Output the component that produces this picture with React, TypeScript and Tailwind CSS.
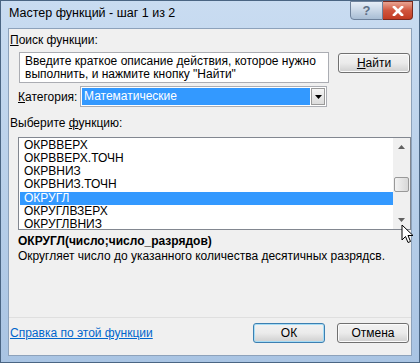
import React from 'react';

const font = { fontFamily: '"Segoe UI", "Liberation Sans", Arial, sans-serif' };

const items = ['ОКРВВЕРХ', 'ОКРВВЕРХ.ТОЧН', 'ОКРВНИЗ', 'ОКРВНИЗ.ТОЧН', 'ОКРУГЛ', 'ОКРУГЛВЗЕРХ', 'ОКРУГЛВНИЗ'];

function Btn({ children, primary }: { children: React.ReactNode; primary?: boolean }) {
  return (
    <div
      className={`flex h-[20px] w-[72px] items-center justify-center rounded-[3px] border text-[12px] text-black bg-gradient-to-b from-[#f2f2f2] via-[#ebebeb] to-[#cfcfcf] ${
        primary ? 'border-[#3c7fb1] shadow-[inset_0_0_0_1px_#a6dcf5]' : 'border-[#707070] shadow-[inset_0_0_0_1px_#fbfbfb]'
      }`}
    >
      {children}
    </div>
  );
}

function Cursor() {
  return (
    <svg className="absolute left-[400px] top-[223px]" width="13" height="20" viewBox="0 0 13 20">
      <path d="M1 1 L1 16 L4.5 12.5 L7 18.5 L9.5 17.5 L7 11.5 L12 11.5 Z" fill="#fff" stroke="#000" strokeWidth="1" strokeLinejoin="round" />
    </svg>
  );
}

export default function App() {
  return (
    <div style={font} className="relative h-[363px] w-[420px] overflow-hidden border border-[#4a6583] bg-gradient-to-b from-[#c9dcf1] via-[#b9d0ea] to-[#a9c4e3] text-[12px] text-black">
      {/* title bar */}
      <div className="flex h-[27px] items-start justify-between">
        <div className="pl-[8px] pt-[5px] text-[12.5px] leading-[15px] text-black">Мастер функций - шаг 1 из 2</div>
        <div className="mr-[6px] flex">
          <div className="flex h-[19px] w-[33px] items-center justify-center rounded-bl-[4px] border border-[#6d819b] bg-gradient-to-b from-[#e6eef7] via-[#c8d6e6] to-[#a8bdd4] text-[13px] font-bold leading-none text-[#5d6f86]">
            ?
          </div>
          <div className="flex h-[19px] w-[30px] items-center justify-center rounded-br-[4px] border border-l-0 border-[#7a2a1f] bg-gradient-to-b from-[#e8a493] via-[#d0553d] to-[#c23b22]">
            <svg width="12" height="10" viewBox="0 0 12 10">
              <path d="M2 1 L10 9 M10 1 L2 9" stroke="#fff" strokeWidth="2.6" strokeLinecap="square" />
              <path d="M2 1 L10 9 M10 1 L2 9" stroke="#fff" strokeWidth="2" />
            </svg>
          </div>
        </div>
      </div>

      {/* client area */}
      <div className="mx-[7px] h-[328px] border border-[#8da2bb] bg-[#f0f0f0]">
        <div className="pl-[1px] pt-[3px] leading-[16px]">
          <span className="underline">П</span>оиск функции:
        </div>

        <div className="mt-[4px] flex items-start">
          <div className="ml-[10px] h-[31px] w-[310px] border border-[#abadb3] bg-white pl-[5px] pt-[2px] text-[12px] leading-[13px]">
            Введите краткое описание действия, которое нужно
            <br />
            выполнить, и нажмите кнопку "Найти"
          </div>
          <div className="ml-[9px] mt-[1px]">
            <Btn>
              <span className="underline">Н</span>айти
            </Btn>
          </div>
        </div>

        <div className="mt-[3px] flex items-center">
          <div className="ml-[9px] w-[62px]">
            <span className="underline">К</span>атегория:
          </div>
          <div className="flex h-[21px] w-[247px] items-stretch border border-[#abadb3] bg-white p-[1px]">
            <div className="flex-1 bg-[#3399ff] pl-[2px] leading-[17px] text-white">Математические</div>
            <div className="ml-[1px] flex w-[14px] items-center justify-center border border-[#9a9a9a] bg-gradient-to-b from-[#f5f5f5] to-[#dcdcdc]">
              <svg width="7" height="4" viewBox="0 0 7 4">
                <path d="M0 0 H7 L3.5 4 Z" fill="#000" />
              </svg>
            </div>
          </div>
        </div>

        <div className="mt-[8px] pl-[1px] leading-[16px]">
          Выберите <span className="underline">ф</span>ункцию:
        </div>

        <div className="ml-[9px] mt-[6px] flex h-[93px] w-[393px] border border-[#828790] bg-white">
          <div className="flex-1 pl-[1px] pt-[1px]">
            {items.map((it) => (
              <div
                key={it}
                className={`h-[13px] pl-[4px] text-[12px] leading-[13px] ${it === 'ОКРУГЛ' ? 'mt-[1px] bg-[#3399ff] text-white' : 'mt-[0px]'}`}
              >
                {it}
              </div>
            ))}
          </div>
          <div className="flex w-[17px] flex-col items-center bg-[#f0f0f0]">
            <svg className="mt-[7px]" width="7" height="4" viewBox="0 0 7 4">
              <path d="M3.5 0 L7 4 H0 Z" fill="#606060" />
            </svg>
            <div className="mt-[28px] h-[15px] w-[15px] rounded-[2px] border border-[#999] bg-gradient-to-r from-[#f3f3f3] to-[#d8d8d8]" />
            <div className="flex-1" />
            <svg className="mb-[7px]" width="7" height="4" viewBox="0 0 7 4">
              <path d="M0 0 H7 L3.5 4 Z" fill="#606060" />
            </svg>
          </div>
        </div>

        <div className="mt-[4px] pl-[9px] font-bold leading-[15px]">ОКРУГЛ(число;число_разрядов)</div>
        <div className="pl-[9px] leading-[15px]">Округляет число до указанного количества десятичных разрядсв.</div>

        <div className="mt-[53px] border-t border-[#dfdfdf]" />

        <div className="mt-[5px] flex items-center justify-between pr-[2px]">
          <div className="pl-[1px] text-[#0066cc] underline">Справка по этой функции</div>
          <div className="flex gap-[12px]">
            <Btn primary>ОК</Btn>
            <Btn>Отмена</Btn>
          </div>
        </div>
      </div>

      <Cursor />
    </div>
  );
}
